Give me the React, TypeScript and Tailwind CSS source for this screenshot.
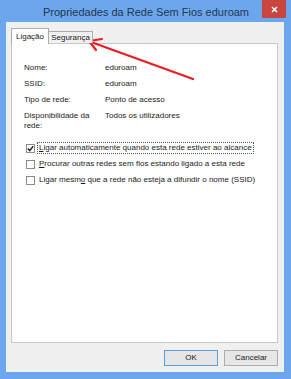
import type { ReactNode } from 'react';

const font = { fontFamily: '"Liberation Sans", Arial, sans-serif' };

function InfoRow({ label, value }: { label: ReactNode; value: string }) {
  return (
    <div className="flex">
      <div className="w-[81px] leading-[10px]">{label}</div>
      <div className="leading-[10px]">{value}</div>
    </div>
  );
}

function Checkbox({ checked, children, focused }: { checked?: boolean; children: ReactNode; focused?: boolean }) {
  return (
    <div className="flex items-center h-[16px]">
      <div className="w-[9px] h-[9px] border border-[#8a8a8a] bg-white flex items-center justify-center shrink-0">
        {checked && (
          <svg width="7" height="7" viewBox="0 0 7 7">
            <path d="M0.8 3.6 L2.7 5.6 L6.2 1.2" stroke="#222" strokeWidth="1.4" fill="none" />
          </svg>
        )}
      </div>
      <span
        className={
          'ml-[2px] px-[1px] leading-[10px] ' +
          (focused ? 'border border-dotted border-[#555]' : 'border border-transparent')
        }
      >
        {children}
      </span>
    </div>
  );
}

export default function App() {
  return (
    <div
      className="relative w-[291px] h-[379px] bg-[#6ca6ec] flex flex-col pl-[6px] pr-[7px] pb-[7px] text-[8px] text-[#1a1a1a]"
      style={font}
    >
      {/* title bar */}
      <div className="relative h-[22px] flex items-center justify-center shrink-0 pt-[3px]">
        <span className="text-[11px] text-[#22384f] pl-[2px]">Propriedades da Rede Sem Fios eduroam</span>
        <div className="absolute right-[-2px] top-0 w-[24px] h-[18px] bg-[#c9453f] flex items-center justify-center">
          <svg width="7" height="7" viewBox="0 0 7 7">
            <path d="M1 1 L6 6 M6 1 L1 6" stroke="#fff" strokeWidth="1.5" />
          </svg>
        </div>
      </div>

      {/* client area */}
      <div className="flex-1 bg-[#f0f0f0] flex flex-col pl-[5px] pr-[6px] pt-[6px] pb-[6px]">
        {/* tabs */}
        <div className="flex items-end h-[15px] relative z-10">
          <div className="h-[16px] w-[38px] bg-white border border-b-0 border-[#adadad] flex items-center justify-center -mb-[1px]">
            Ligação
          </div>
          <div className="h-[12px] w-[44px] bg-[#f0f0f0] border border-l-0 border-b-0 border-[#adadad] flex items-center justify-center">
            Segurança
          </div>
        </div>

        {/* panel */}
        <div className="flex-1 bg-white border border-[#c8c8c8] pl-[12px] pt-[19px]">
          <div className="flex flex-col gap-[6px]">
            <InfoRow label="Nome:" value="eduroam" />
            <InfoRow label="SSID:" value="eduroam" />
            <InfoRow label="Tipo de rede:" value="Ponto de acesso" />
            <InfoRow
              label={
                <>
                  Disponibilidade da
                  <br />
                  rede:
                </>
              }
              value="Todos os utilizadores"
            />
          </div>
          <div className="mt-[9px] pl-[2px] flex flex-col">
            <Checkbox checked focused>
              <span className="underline">L</span>igar automaticamente quando esta rede estiver ao alcance
            </Checkbox>
            <Checkbox>
              <span className="underline">P</span>rocurar outras redes sem fios estando ligado a esta rede
            </Checkbox>
            <Checkbox>
              Ligar mesm<span className="underline">o</span> que a rede não esteja a difundir o nome (SSID)
            </Checkbox>
          </div>
        </div>

        {/* buttons */}
        <div className="flex justify-end gap-[6px] mt-[7px]">
          <button className="w-[54px] h-[16px] border border-[#5b9fdc] bg-[#e6e6e6] text-[8px]" style={font}>
            OK
          </button>
          <button className="w-[54px] h-[16px] border border-[#adadad] bg-[#e6e6e6] text-[8px]" style={font}>
            Cancelar
          </button>
        </div>
      </div>

      {/* red annotation arrow */}
      <svg className="absolute left-0 top-0 pointer-events-none" width="291" height="379">
        <path d="M193 79 L91 42" stroke="#ec1c24" strokeWidth="2.2" strokeLinecap="round" />
        <path d="M102 39 L89 41 L96 50" stroke="#ec1c24" strokeWidth="2.2" fill="none" strokeLinecap="round" strokeLinejoin="round" />
      </svg>
    </div>
  );
}
